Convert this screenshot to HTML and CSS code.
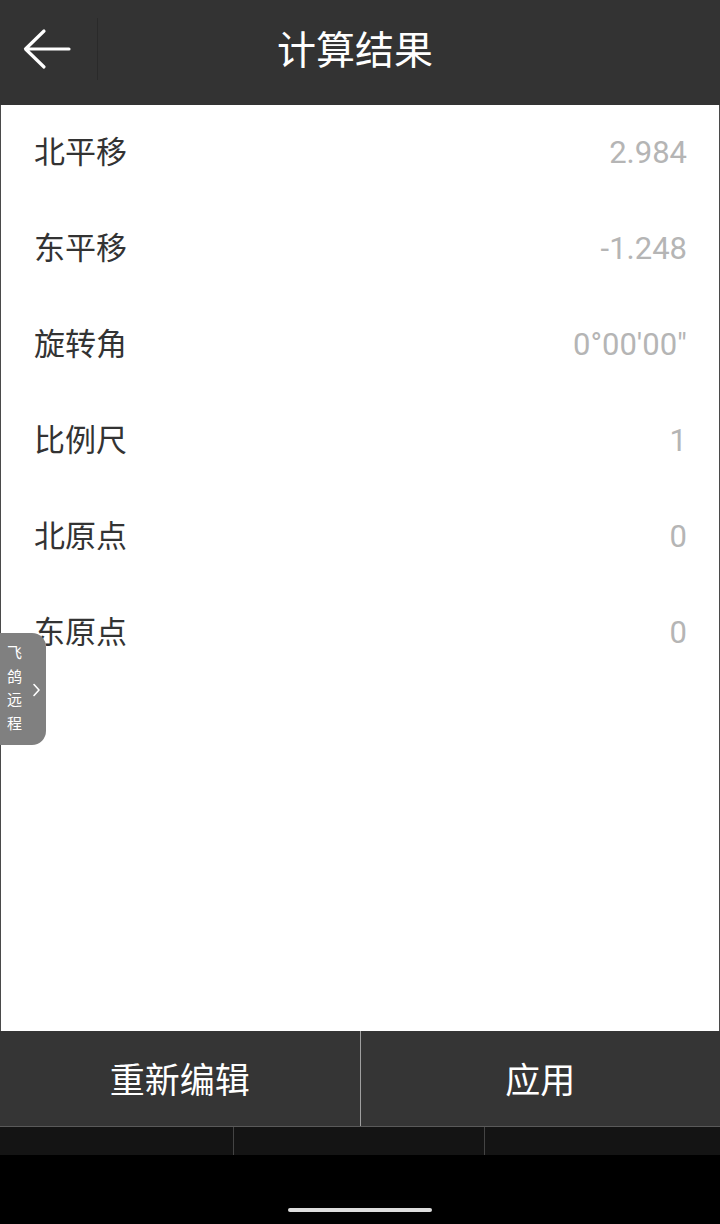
FILE: index.html
```html
<!DOCTYPE html>
<html>
<head>
    <meta charset="utf-8">
    <title>计算结果</title>
    <link rel="stylesheet" href="styles.css">
</head>
<body>
    <div class="screen">
        <!-- Title bar -->
        <div class="top-bar">
            <div class="back-button">
                <svg width="50" height="42" viewBox="0 0 50 42">
                    <path d="M47 21 H4 M22 3 L3.5 21 L22 39" fill="none" stroke="#ffffff" stroke-width="3.2" stroke-linecap="round" stroke-linejoin="round"/>
                </svg>
            </div>
            <div class="title">计算结果</div>
            <div class="spacer"></div>
        </div>

        <!-- Result list -->
        <div class="result-list">
            <div class="result-row"><span class="label">北平移</span><span class="value">2.984</span></div>
            <div class="result-row"><span class="label">东平移</span><span class="value">-1.248</span></div>
            <div class="result-row"><span class="label">旋转角</span><span class="value">0°00'00"</span></div>
            <div class="result-row"><span class="label">比例尺</span><span class="value">1</span></div>
            <div class="result-row"><span class="label">北原点</span><span class="value">0</span></div>
            <div class="result-row"><span class="label">东原点</span><span class="value">0</span></div>
        </div>

        <!-- Action buttons -->
        <div class="actions">
            <button class="action-button">重新编辑</button>
            <button class="action-button">应用</button>
        </div>

        <!-- System navigation -->
        <div class="nav-bar">
            <div class="nav-cell first"></div>
            <div class="nav-cell second"></div>
            <div class="nav-cell"></div>
        </div>
        <div class="gesture-area">
            <div class="home-indicator"></div>
        </div>

        <!-- Floating remote tab -->
        <div class="remote-tab">
            <div class="remote-text">飞<br>鸽<br>远<br>程</div>
            <svg class="remote-arrow" width="9" height="14" viewBox="0 0 9 14">
                <path d="M2 1.5 L7 7 L2 12.5" fill="none" stroke="#ffffff" stroke-width="1.6" stroke-linecap="round" stroke-linejoin="round"/>
            </svg>
        </div>
    </div>
</body>
</html>
```

FILE: styles.css
```css
/* Page base */
body {
    margin: 0;
    background-color: #000000;
    font-family: Roboto, "Noto Sans CJK SC", sans-serif;
}

.screen {
    position: relative;
    width: 720px;
    height: 1224px;
    display: flex;
    flex-direction: column;
    overflow: hidden;
}

/* Title bar */
.top-bar {
    height: 105px;
    box-sizing: border-box;
    padding-bottom: 7px;
    background-color: #333333;
    display: grid;
    grid-template-columns: 98px 1fr 98px;
    align-items: center;
}

.back-button {
    height: 62px;
    display: flex;
    align-items: center;
    padding-left: 22px;
    border-right: 1px solid #2a2a2a;
}

.back-button svg {
    display: block;
}

.title {
    color: #ffffff;
    font-size: 39px;
    line-height: 44px;
    text-align: center;
    padding: 4px 10px 0 0;
}

/* Result list */
.result-list {
    height: 926px;
    background-color: #ffffff;
    border-left: 1px solid #4a4a4a;
    border-right: 1px solid #4a4a4a;
}

.result-row {
    height: 96px;
    display: flex;
    align-items: center;
    justify-content: space-between;
    padding: 0 32px 0 33px;
}

.label {
    color: #333333;
    font-size: 31px;
    line-height: 40px;
}

.value {
    color: #b5b5b5;
    font-size: 31px;
    line-height: 40px;
}

/* Action buttons */
.actions {
    height: 96px;
    display: flex;
    background-color: #353535;
    border-bottom: 1px solid #5a5a5a;
    box-sizing: border-box;
}

.action-button {
    flex: 1;
    border: none;
    background-color: #353535;
    color: #ffffff;
    font-family: Roboto, "Noto Sans CJK SC", sans-serif;
    font-size: 35px;
    padding: 0 0 3px 0;
    cursor: pointer;
}

.action-button:first-child {
    border-right: 1px solid #a0a0a0;
}

/* System navigation */
.nav-bar {
    height: 28px;
    display: flex;
    background-color: #141414;
}

.nav-cell {
    height: 100%;
}

.nav-cell.first {
    width: 233px;
    border-right: 1px solid #444444;
}

.nav-cell.second {
    width: 250px;
    border-right: 1px solid #444444;
}

.gesture-area {
    flex: 1;
    display: flex;
    justify-content: center;
}

.home-indicator {
    width: 144px;
    height: 4px;
    margin-top: 53px;
    border-radius: 2px;
    background-color: #dddddd;
}

/* Floating remote tab */
.remote-tab {
    position: absolute;
    left: 0;
    top: 633px;
    width: 46px;
    height: 112px;
    background-color: #808080;
    border-radius: 0 14px 14px 0;
    display: flex;
    align-items: center;
}

.remote-text {
    color: #ffffff;
    font-size: 15px;
    line-height: 23.5px;
    padding-left: 7px;
    width: 16px;
}

.remote-arrow {
    margin-left: 9px;
    margin-top: 2px;
}
```
